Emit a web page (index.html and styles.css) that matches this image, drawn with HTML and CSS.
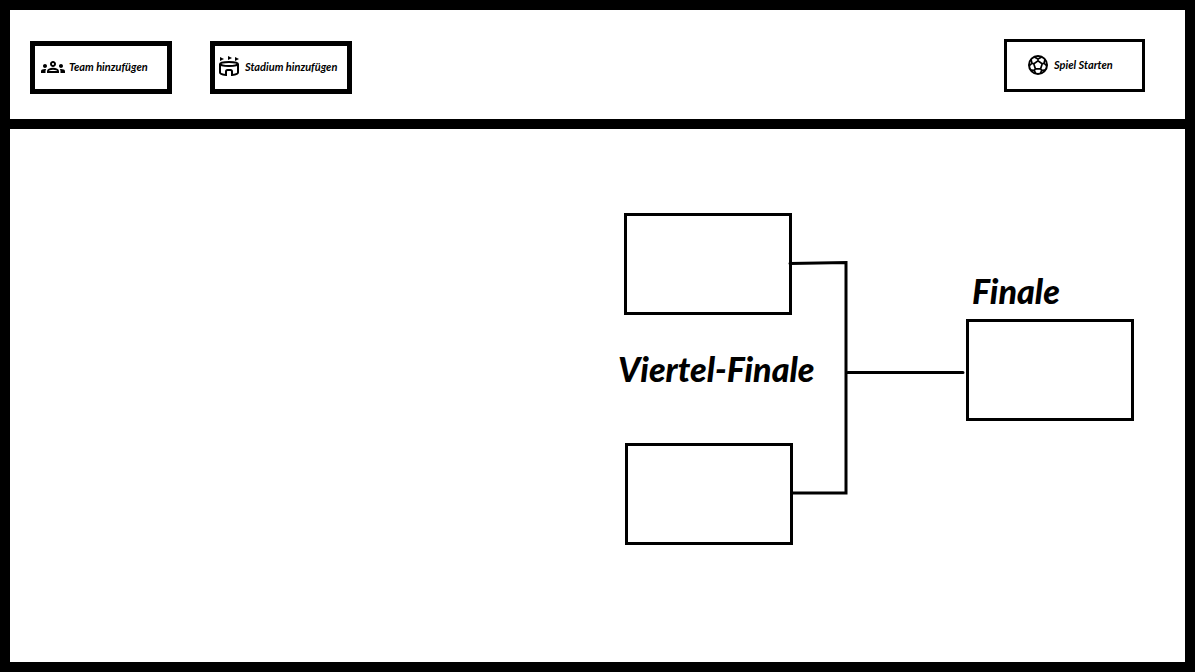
FILE: index.html
```html
<!DOCTYPE html>
<html lang="de">
<head>
<meta charset="utf-8">
<meta name="viewport" content="width=device-width, initial-scale=1">
<title>Turnier</title>
<link rel="stylesheet" href="styles.css">
</head>
<body>
<div class="frame">
  <header class="toolbar">
    <div class="actions">
      <button class="btn" type="button">
        <svg class="icon" viewBox="0 0 24 24" aria-hidden="true"><path d="M4 13c1.100 0 2-.9 2-2s-.9-2-2-2-2 .9-2 2 .9 2 2 2zm1.130 1.100c-.37-.06-.74-.1-1.130-.1-.99 0-1.930.21-2.780.58C.48 14.900 0 15.620 0 16.430V18h4.500v-1.610c0-.83.23-1.610.63-2.290zM20 13c1.100 0 2-.9 2-2s-.9-2-2-2-2 .9-2 2 .9 2 2 2zm4 3.430c0-.81-.48-1.530-1.220-1.850-.85-.37-1.790-.58-2.780-.58-.39 0-.76.04-1.130.1.400.68.63 1.460.63 2.290V18H24v-1.570zM16.240 13.650c-1.170-.52-2.610-.9-4.240-.9s-3.070.39-4.240.9C6.680 14.130 6 15.210 6 16.390V18h12v-1.610c0-1.180-.68-2.260-1.760-2.740zM8.070 16c.09-.23.13-.39.91-.69.97-.38 1.990-.56 3.020-.56s2.050.18 3.020.56c.77.3.81.46.91.69H8.070zM12 8c.55 0 1 .45 1 1s-.45 1-1 1-1-.45-1-1 .45-1 1-1m0-2c-1.660 0-3 1.340-3 3s1.340 3 3 3 3-1.340 3-3-1.340-3-3-3z"/></svg>
        <span>Team hinzufügen</span>
      </button>
      <button class="btn btn-stadium" type="button">
        <svg class="icon" viewBox="0 0 24 24" aria-hidden="true">
          <path d="M3 2l4 2-4 2zM11 1l4 2-4 2zM18 2l4 2-4 2z"/>
          <g class="stroke"><ellipse cx="12" cy="9" rx="9" ry="2"/><path d="M3 9v8.500c0 1.300 2 2.100 6 2.500V16.500c0-1 .7-1.500 1.500-1.500h3c.8 0 1.500.5 1.500 1.500V20c4-.4 6-1.200 6-2.500V9"/></g>
        </svg>
        <span>Stadium hinzufügen</span>
      </button>
    </div>
    <button class="btn btn-start" type="button">
      <svg class="icon" viewBox="0 0 24 24" aria-hidden="true"><circle class="stroke" cx="12" cy="12" r="9"/><path class="stroke seams" d="M12 7.800l4.200 3.100-1.600 4.900H9.400L7.800 10.900zM12 7.800V6M7.800 10.900L6 10.300M16.200 10.900l1.800-.6M9.400 15.800L8.300 17.400M14.600 15.800l1.100 1.600M8.300 4L12 6l3.700-2M3.100 12.800L6 10.300 5 6.400M20.900 12.800L18 10.300l1-3.900M4.900 17.200l3.400.2 1.300 3.200M19.100 17.200l-3.400.2-1.300 3.200"/></svg>
      <span>Spiel Starten</span>
    </button>
  </header>
  <main class="stage">
    <section class="bracket">
      <div class="round">
        <div class="match"></div>
        <h2 class="title title-semi">Viertel-Finale</h2>
        <div class="match match-lower"></div>
      </div>
      <svg class="links" viewBox="0 0 174 332" aria-hidden="true"><path d="M-2 50.500L54 49.500V280H1M56 159.500H171"/></svg>
      <div class="round round-final">
        <h2 class="title title-final">Finale</h2>
        <div class="match"></div>
      </div>
    </section>
  </main>
</div>
</body>
</html>
```
FILE: styles.css
```css
* {
  box-sizing: border-box;
}

body {
  margin: 0;
  background: #fff;
  color: #000;
  font-family: "Harlow Solid Italic", "Lato", sans-serif;
}

.frame {
  display: flex;
  flex-direction: column;
  min-height: 100vh;
  border: 10px solid #000;
}

.toolbar {
  display: flex;
  justify-content: space-between;
  align-items: flex-start;
  padding: 29px 40px 25px 20px;
  border-bottom: 10px solid #000;
}

.actions {
  display: flex;
  gap: 38px;
  padding-top: 2px;
}

.btn {
  display: flex;
  align-items: center;
  gap: 4px;
  width: 142px;
  height: 53px;
  padding: 0 6px 1px;
  border: 5px solid #000;
  background: #fff;
  color: #000;
  font: italic 700 11px/16px "Harlow Solid Italic", "Lato", sans-serif;
  white-space: nowrap;
  cursor: pointer;
}

.btn-stadium {
  padding: 0 2px 1px;
}

.btn-start {
  width: 141px;
  padding: 0 19px 2px;
  border-width: 3px;
}

.icon {
  flex: none;
  width: 24px;
  height: 24px;
}

.stroke {
  fill: none;
  stroke: #000;
  stroke-width: 2;
}

.seams {
  stroke-width: 1.7;
}

.stage {
  flex: 1;
  padding: 84px 51px 84px 20px;
}

.bracket {
  display: flex;
  justify-content: flex-end;
}

.round {
  width: 168px;
}

.match {
  height: 102px;
  border: 3px solid #000;
}

.match-lower {
  margin: 0 -1px 0 1px;
}

.title {
  margin: 0;
  font-size: 34px;
  line-height: 40px;
  font-style: italic;
  font-weight: 900;
  white-space: nowrap;
}

.title-semi {
  margin: 34px 0 54px -6px;
}

.links {
  flex: none;
  width: 174px;
  height: 332px;
  overflow: visible;
  fill: none;
  stroke: #000;
  stroke-width: 3;
  stroke-linecap: round;
}

.round-final {
  padding-top: 58px;
}

.title-final {
  margin: 0 0 8px 6px;
}
```
